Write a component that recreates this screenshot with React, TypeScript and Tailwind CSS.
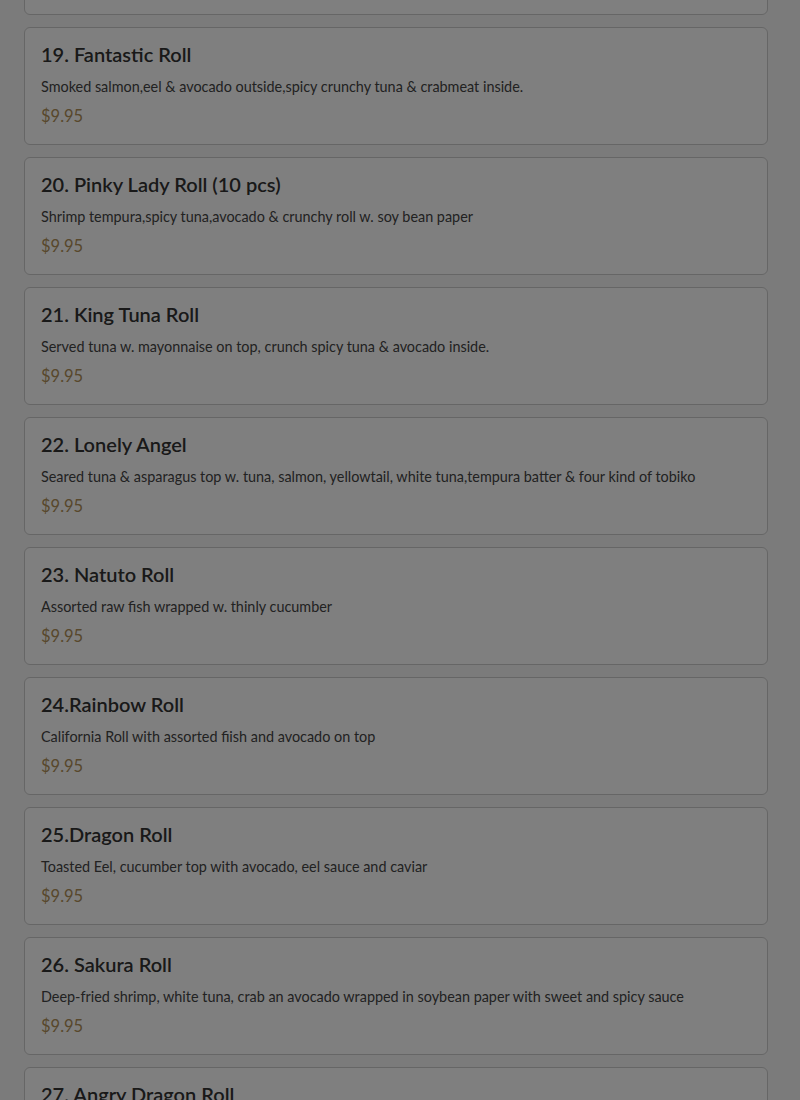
const items = [
  { name: "18. Spider Roll", desc: "Soft shell crab, cucumber, avocado & tobiko", price: "$9.95" },
  { name: "19. Fantastic Roll", desc: "Smoked salmon,eel & avocado outside,spicy crunchy tuna & crabmeat inside.", price: "$9.95" },
  { name: "20. Pinky Lady Roll (10 pcs)", desc: "Shrimp tempura,spicy tuna,avocado & crunchy roll w. soy bean paper", price: "$9.95" },
  { name: "21. King Tuna Roll", desc: "Served tuna w. mayonnaise on top, crunch spicy tuna & avocado inside.", price: "$9.95" },
  { name: "22. Lonely Angel", desc: "Seared tuna & asparagus top w. tuna, salmon, yellowtail, white tuna,tempura batter & four kind of tobiko", price: "$9.95" },
  { name: "23. Natuto Roll", desc: "Assorted raw fish wrapped w. thinly cucumber", price: "$9.95" },
  { name: "24.Rainbow Roll", desc: "California Roll with assorted fiish and avocado on top", price: "$9.95" },
  { name: "25.Dragon Roll", desc: "Toasted Eel, cucumber top with avocado, eel sauce and caviar", price: "$9.95" },
  { name: "26. Sakura Roll", desc: "Deep-fried shrimp, white tuna, crab an avocado wrapped in soybean paper with sweet and spicy sauce", price: "$9.95" },
  { name: "27. Angry Dragon Roll", desc: "Shrimp tempura & cucumber inside, spicy tuna & eel on top", price: "$9.95" },
];

export default function App() {
  return (
    <div className="relative h-[1100px] overflow-hidden bg-[#f6f6f6] font-['Lato','Open_Sans',sans-serif]">
      <div className="-mt-[103px] flex flex-col gap-3 pl-6 pr-8">
        {items.map((it) => (
          <div key={it.name} className="rounded-md border border-[#cccccc] bg-white px-4 pt-4 pb-4">
            <h3 className="text-[20px] font-semibold leading-5 text-[#333333]">{it.name}</h3>
            <p className="mt-[13px] text-[14.4px] leading-5 text-[#444444]">{it.desc}</p>
            <p className="mt-[7px] text-[16.5px] leading-6 text-[#b09058]">{it.price}</p>
          </div>
        ))}
      </div>
      <div className="fixed inset-0 bg-black/50" />
    </div>
  );
}
